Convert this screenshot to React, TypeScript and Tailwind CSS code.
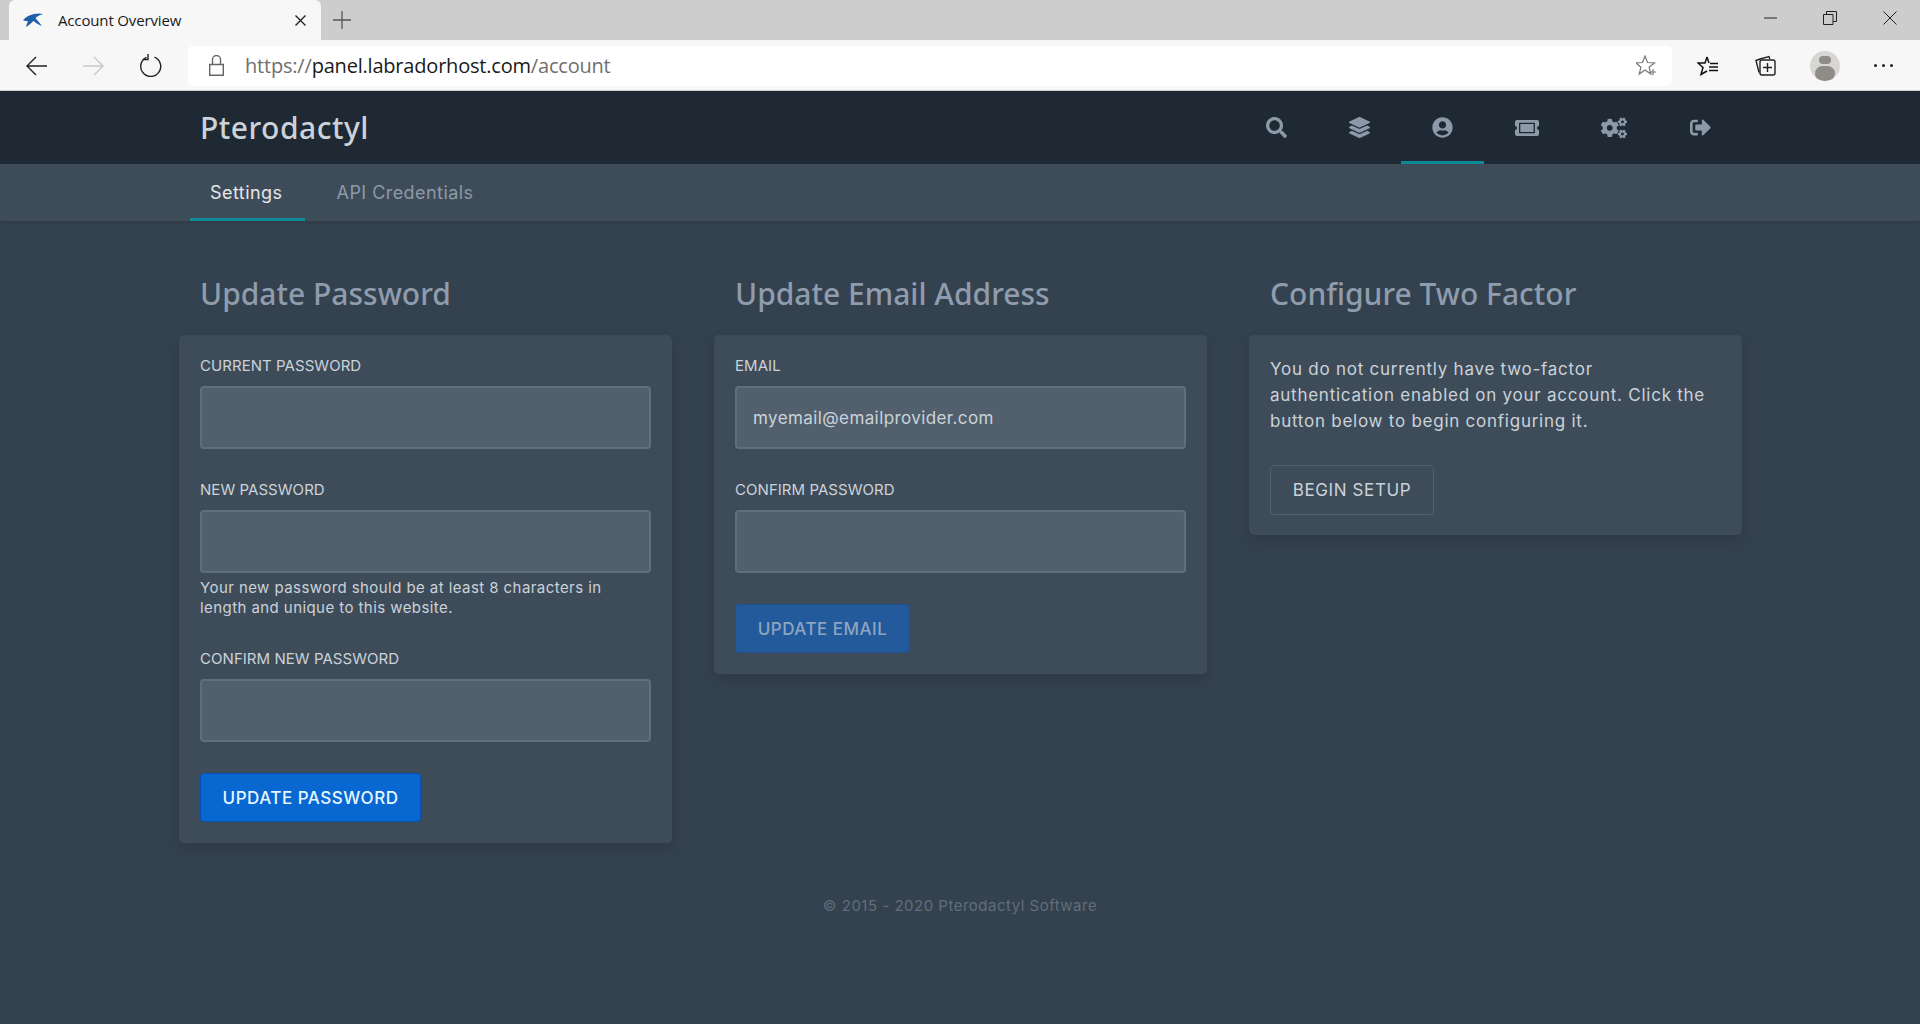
import React from "react";
import { FaSearch, FaLayerGroup, FaUserCircle, FaTicketAlt, FaCogs, FaSignOutAlt } from "react-icons/fa";

const body = "font-['Inter','Noto_Sans',sans-serif]";

function Field({ label, value, help }: { label: string; value?: string; help?: string }) {
  return (
    <div className="mb-[31px]">
      <div className="h-5 mb-[10px] text-[15px] leading-5 tracking-[0.05px] text-[#cbd2d9] uppercase">{label}</div>
      <div className="h-[63px] pt-[2px] rounded-[4px] border-2 border-[#616e7c] bg-[#52606d] px-4 flex items-center text-[17px] tracking-[0.4px] text-[#cbd2d9]">{value}</div>
      {help && <div className="mt-[5px] text-[15px] leading-5 text-[#cbd2d9] tracking-[0.43px] pr-10">{help}</div>}
    </div>
  );
}

function Column({ title, children }: { title: string; children: React.ReactNode }) {
  return (
    <div>
      <h2 className="h-[42px] mb-5 pl-[21px] text-[30px] leading-[42px] font-medium text-[#8f9cad] font-['Noto_Sans',sans-serif]">{title}</h2>
      <div className="rounded-[5px] bg-[#3e4c59] p-[21px] shadow-[0_6px_14px_rgba(0,0,0,0.1)]">{children}</div>
    </div>
  );
}

function ChromeIcons() {
  return (
    <>
      <svg width="21" height="20" viewBox="0 0 21 20" className="ml-[26px]" fill="none" stroke="#222" strokeWidth="1.4"><path d="M21 10H1M10 1l-9 9 9 9" /></svg>
      <svg width="21" height="20" viewBox="0 0 21 20" className="ml-[36px]" fill="none" stroke="#c8c8c8" strokeWidth="1.4"><path d="M0 10h20M11 1l9 9-9 9" /></svg>
      <svg width="22" height="23" viewBox="0 0 22 23" className="ml-[36px]" fill="none" stroke="#222" strokeWidth="1.4"><path d="M14.500 3.200A10 10 0 1 1 6.500 3.400" /><path d="M6 0.500v5.500H0.800" transform="translate(2 -0.500)" /></svg>
    </>
  );
}

function NavIcon({ children, active, gap }: { children: React.ReactNode; active?: boolean; gap?: boolean }) {
  return (
    <div className={`h-[73px] px-[31px] pt-[3px] flex items-center border-b-[3px] ${gap ? "mr-px" : ""} ${active ? "border-[#0e8a96]" : "border-transparent"} text-[#8d99a8]`}>
      {children}
    </div>
  );
}

export default function App() {
  return (
    <div className={`min-h-[1024px] bg-[#34414e] ${body}`}>
      {/* browser tab strip */}
      <div className="h-10 bg-[#cdcdcd] flex items-end justify-between">
        <div className="flex items-center h-10">
          <div className="ml-[9px] w-[312px] h-10 bg-[#f7f7f7] rounded-t-[6px] flex items-center font-['Open_Sans',sans-serif]">
            <svg width="20" height="14" viewBox="0 0 20 14" className="ml-[14px]"><path d="M0 7C3 4 6 2 11 1c3-.5 6-1 9 0-3 1-6 2-7.500 4 2 2.500 4 5 6.500 8-3-1-6-3-8.500-5C8 10 5 13 3 14c.5-2 1-4 2-6-2 0-3.500 0-5-1z" fill="#1d5fa8" /></svg>
            <span className="ml-[15px] text-[15px] text-[#1a1a1a] leading-5 tracking-[-0.15px]">Account Overview</span>
            <svg width="11" height="11" viewBox="0 0 11 11" className="ml-auto mr-[15px]" stroke="#222" strokeWidth="1.4"><path d="M0.500 0.500l10 10M10.500 0.500l-10 10" /></svg>
          </div>
          <svg width="18" height="18" viewBox="0 0 18 18" className="ml-3" stroke="#555" strokeWidth="1.300"><path d="M9 0v18M0 9h18" /></svg>
        </div>
        <div className="flex items-center h-10 self-start pb-[4px]">
          <svg width="13" height="2" viewBox="0 0 13 2" stroke="#222"><path d="M0 1h13" /></svg>
          <svg width="14" height="14" viewBox="0 0 14 14" className="ml-[46px]" fill="none" stroke="#222"><path d="M0.500 3.500h9.500v10H0.500zM3.500 3.500V0.500h10v10H10" /></svg>
          <svg width="14" height="14" viewBox="0 0 14 14" className="ml-[46px] mr-[23px]" stroke="#222"><path d="M0.500 0.500l13 13M13.500 0.500l-13 13" /></svg>
        </div>
      </div>
      {/* browser toolbar */}
      <div className="h-[51px] pt-px bg-[#f7f7f7] border-b border-[#cfcfcf] flex items-center">
        <ChromeIcons />
        <div className="ml-[26px] w-[1484px] h-10 bg-white rounded-[5px] flex items-center font-['Open_Sans',sans-serif]">
          <svg width="15" height="21" viewBox="0 0 15 21" className="ml-[21px]" fill="none" stroke="#666" strokeWidth="1.400"><path d="M0.700 9.500h13.600v10.800H0.700zM3.500 9.500V4.500a4 4 0 0 1 8 0v5" /></svg>
          <span className="ml-[21px] text-[20px] tracking-[-0.2px] text-[#6f6f6f]">https://<span className="text-[#1a1a1a]">panel.labradorhost.com</span>/account</span>
          <svg width="22" height="21" viewBox="0 0 22 21" className="ml-auto mr-[14px]" fill="none" stroke="#777" strokeWidth="1.200"><path d="M9 1l2.500 6.500 7 .4-5.400 4.400 1.700 6.700L9 15l-5.800 4 1.700-6.700L0 7.900l6.500-.4z" /><path d="M17 14v6M14 17h6" /></svg>
        </div>
        <svg width="22" height="20" viewBox="0 0 22 20" className="ml-[25px]" fill="none" stroke="#111" strokeWidth="1.500"><path d="M10 1L8 7H1l5 4.500L4 18.500l6-3.500M10 1l2 6" /><path d="M13 7.500h8M12 11h9M12 14.500h9" /></svg>
        <svg width="21" height="21" viewBox="0 0 21 21" className="ml-[36px]" fill="none" stroke="#222" strokeWidth="1.400"><path d="M5 4l9-2.500.8 2.500M5 4L1 5.500l3 12" /><rect x="5" y="5" width="15" height="15" rx="2" /><path d="M12.500 8v9M8 12.500h9" /></svg>
        <div className="ml-[34px] w-[30px] h-[30px] rounded-full bg-[#d6d6d4] overflow-hidden flex flex-col items-center">
          <div className="mt-[5px] w-3 h-3 rounded-full bg-[#8f8c88]" />
          <div className="mt-[2px] w-5 h-5 rounded-full bg-[#8f8c88]" />
        </div>
        <div className="ml-[34px] flex gap-[5.500px]">
          <div className="w-[2.500px] h-[2.500px] bg-[#222] rounded-full" />
          <div className="w-[2.500px] h-[2.500px] bg-[#222] rounded-full" />
          <div className="w-[2.500px] h-[2.500px] bg-[#222] rounded-full" />
        </div>
      </div>
      {/* panel navigation */}
      <nav className="h-[73px] bg-[#1f2933] flex justify-between pl-[200px] pr-[178px]">
        <div className="text-[30px] font-medium leading-[74px] text-[#cbd2d9] tracking-[0.5px] font-['Noto_Sans',sans-serif]">Pterodactyl</div>
        <div className="flex">
          <NavIcon><FaSearch size={21} /></NavIcon>
          <NavIcon><FaLayerGroup size={21} /></NavIcon>
          <NavIcon active><FaUserCircle size={21} /></NavIcon>
          <NavIcon><FaTicketAlt size={24} /></NavIcon>
          <NavIcon gap><FaCogs size={26} /></NavIcon>
          <NavIcon><FaSignOutAlt size={21} /></NavIcon>
        </div>
      </nav>
      <div className="h-[57px] bg-[#3e4c59] flex pl-[190px] shadow-[0_2px_4px_rgba(0,0,0,0.08)] text-[18px] tracking-[0.45px]">
        <div className="h-[57px] pl-[20px] pr-[22px] leading-[57px] border-b-[3px] border-[#0e8a96] text-[#e4e7eb]">Settings</div>
        <div className="h-[57px] ml-[11px] px-[21px] leading-[57px] text-[#8d99a8]">API Credentials</div>
      </div>
      <main className="pt-[52px] pl-[179px] grid grid-cols-[493px_493px_493px] gap-[42px] items-start">
        <Column title="Update Password">
          <Field label="Current Password" />
          <Field label="New Password" help="Your new password should be at least 8 characters in length and unique to this website." />
          <Field label="Confirm New Password" />
          <div className="w-[221px] h-[49px] pt-[2px] rounded-[4px] border border-[#0552b5] bg-[#0967d2] flex items-center justify-center text-[17px] tracking-[0.5px] font-medium text-[#e6f6ff]">UPDATE PASSWORD</div>
        </Column>
        <Column title="Update Email Address">
          <Field label="Email" value="myemail@emailprovider.com" />
          <Field label="Confirm Password" />
          <div className="w-[175px] h-[49px] pt-[2px] rounded-[4px] border border-[#1e4f8f] bg-[#225a9c] flex items-center justify-center text-[17px] tracking-[0.5px] font-medium text-[#8ea5bf]">UPDATE EMAIL</div>
        </Column>
        <Column title="Configure Two Factor">
          <p className="pr-[10px] text-[17px] leading-[26px] tracking-[0.75px] text-[#cbd2d9]">You do not currently have two-factor authentication enabled on your account. Click the button below to begin configuring it.</p>
          <div className="mt-[31px] -mb-px w-[164px] h-[50px] pt-px rounded-[4px] border border-[#52606d] flex items-center justify-center text-[17px] tracking-[0.6px] text-[#cbd2d9]">BEGIN SETUP</div>
        </Column>
      </main>
      <footer className="mt-[53px] text-center text-[15px] leading-5 tracking-[0.5px] text-[#616e7c]">© 2015 - 2020 Pterodactyl Software</footer>
    </div>
  );
}
